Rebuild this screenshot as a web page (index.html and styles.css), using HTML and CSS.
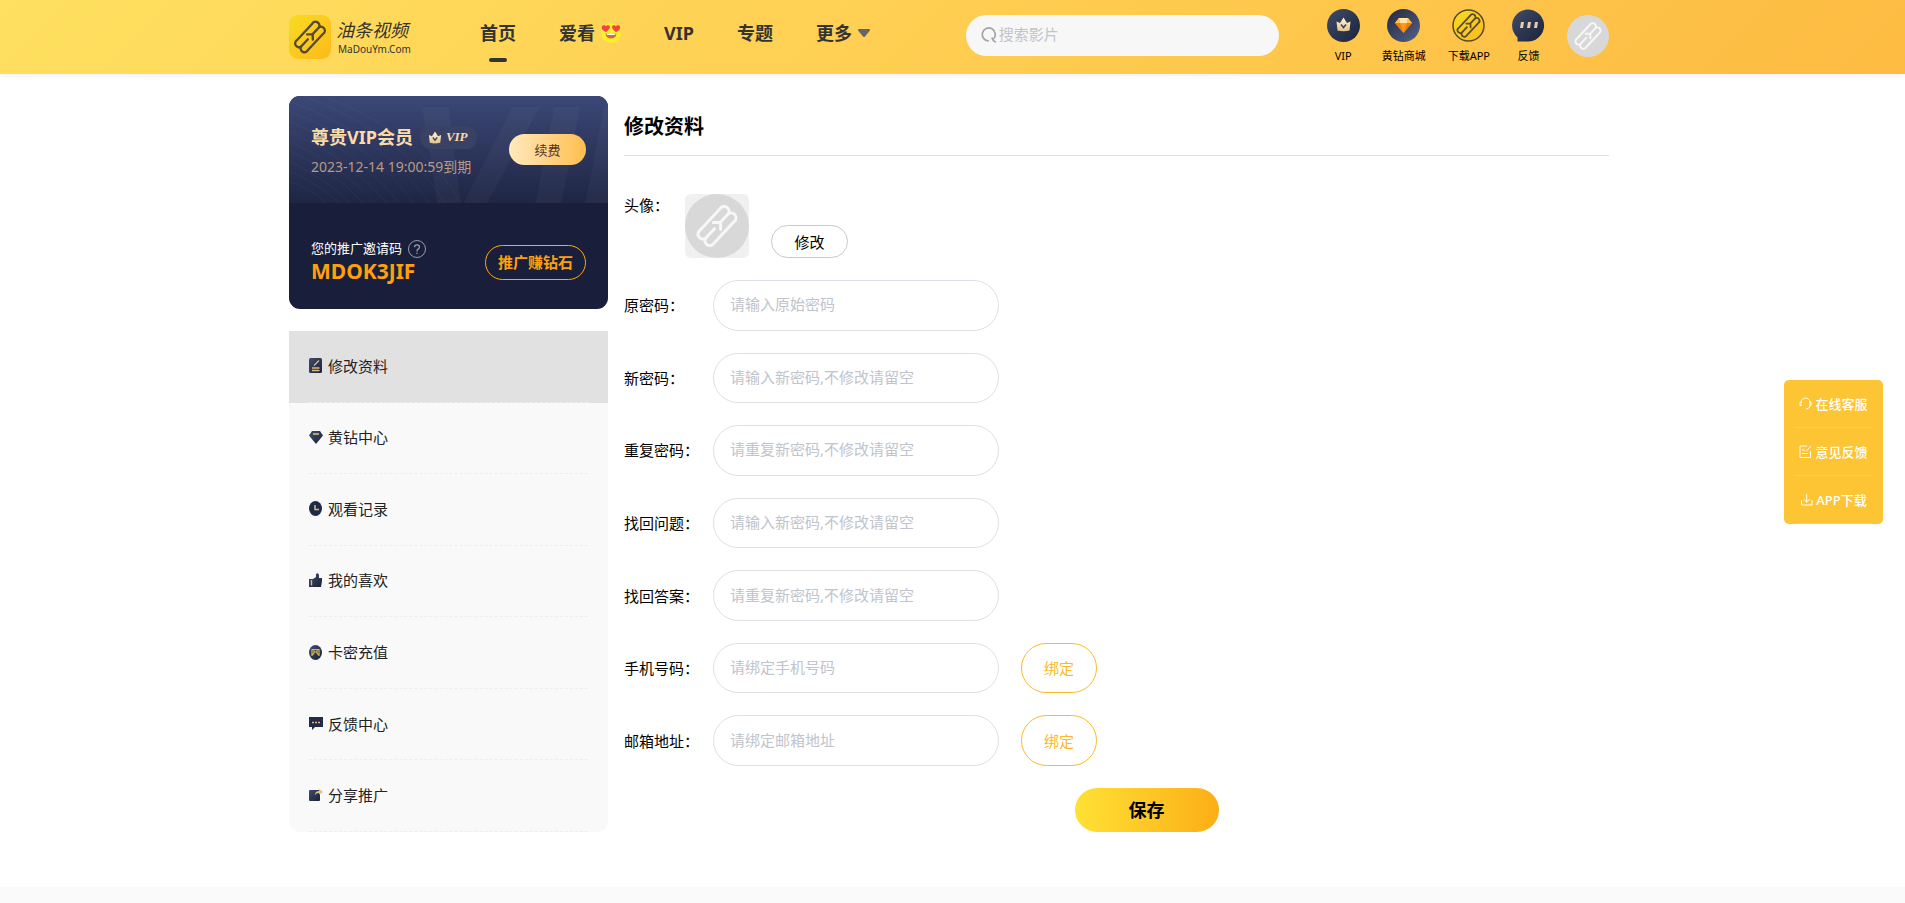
FILE: index.html
```
<!DOCTYPE html>
<html lang="zh-CN">
<head>
  <meta charset="UTF-8">
  <meta name="viewport" content="width=device-width, initial-scale=1.0">
  <title>修改资料 - 油条视频</title>
  <link rel="stylesheet" href="styles.css">
</head>
<body>
  <!-- shared icon shapes -->
  <svg class="defs" width="0" height="0" aria-hidden="true">
    <defs>
      <linearGradient id="dark" x1="0" y1="0" x2="1" y2="1">
        <stop offset="0" stop-color="#404d6c"/>
        <stop offset="1" stop-color="#1b2238"/>
      </linearGradient>
      <linearGradient id="darkUp" x1="0" y1="0" x2="1" y2="1">
        <stop offset="0" stop-color="#23283b"/>
        <stop offset="1" stop-color="#56618a"/>
      </linearGradient>
      <linearGradient id="yellow" x1="0" y1="0" x2="1" y2="1">
        <stop offset="0" stop-color="#f8dc22"/>
        <stop offset="1" stop-color="#fdb91b"/>
      </linearGradient>
      <linearGradient id="cream" x1="0" y1="0" x2="0" y2="1">
        <stop offset="0" stop-color="#fff3d8"/>
        <stop offset="1" stop-color="#e5c48c"/>
      </linearGradient>
    </defs>
    <symbol id="churro" viewBox="-32 -32 64 64">
      <g transform="rotate(-47)" fill="none" stroke="currentColor" stroke-width="3" stroke-linecap="round" stroke-linejoin="round">
        <path d="M-14-9.500H14A4.750 4.750 0 0 1 17 0A4.750 4.750 0 0 1 14 9.500H-14A4.750 4.750 0 0 1-17 0A4.750 4.750 0 0 1-14-9.500Z"/>
        <path d="M17 0H5L0-5M5 0L0 5M-17 0H-4"/>
      </g>
    </symbol>
    <symbol id="crown" viewBox="0 0 16 14">
      <path d="M1 4L4.500 5.500L8 0L11.500 5.500L15 4L14 13Q8 14.500 2 13Z" fill="url(#cream)"/>
      <path d="M5.500 7L8 10L10.500 7" fill="none" stroke="#38415c" stroke-width="1.500"/>
    </symbol>
  </svg>

  <header class="header">
    <div class="container header-inner">
      <a class="logo" href="#">
        <svg class="logo-mark" viewBox="0 0 42 44" aria-hidden="true">
          <rect width="42" height="44" rx="9" fill="url(#yellow)"/>
          <use href="#churro" x="-4" y="-3" width="50" height="50" color="#574a2c"/>
        </svg>
        <span class="logo-text">
          <span class="logo-name">油条视频</span>
          <span class="logo-site">MaDouYm.Com</span>
        </span>
      </a>

      <nav class="nav">
        <a class="active" href="#">首页</a>
        <a href="#">爱看
          <svg width="20" height="20" viewBox="0 0 20 20" aria-hidden="true">
            <circle cx="10" cy="10" r="10" fill="#fdee2c"/>
            <path d="M5 9C1.500 7.500 0 5 1.200 3C2.500 1.600 4.500 2.300 5 3.500C5.500 2 8 1.600 8.800 3C9.600 5 7 7.500 5 9Z" fill="#f5413c"/>
            <path d="M15 9C13 7.500 10.400 5 11.200 3C12 1.600 14.500 2 15 3.500C15.500 2.300 17.500 1.600 18.800 3C20 5 18.500 7.500 15 9Z" fill="#f5413c"/>
            <path d="M4.500 10.500H15.500Q15 15.500 10 15.500T4.500 10.500Z" fill="#d0703a"/>
            <path d="M5.500 10.500H14.500L14 12H6Z" fill="#fff"/>
          </svg>
        </a>
        <a href="#">VIP</a>
        <a href="#">专题</a>
        <a href="#">更多
          <svg width="12" height="8" viewBox="0 0 12 8" aria-hidden="true"><path d="M1 1H11L6 7Z" fill="#666" stroke="#666" stroke-width="2" stroke-linejoin="round"/></svg>
        </a>
      </nav>

      <form class="search">
        <svg width="16" height="16" viewBox="0 0 16 16" aria-hidden="true"><path d="M8 14A6.500 6.500 0 1 1 12.500 12M11 10.500Q12 14.500 15 15" fill="none" stroke="#a5a5a5" stroke-width="1.700"/></svg>
        <input type="text" placeholder="搜索影片" aria-label="搜索影片">
      </form>

      <div class="tools">
        <a href="#">
          <svg viewBox="0 0 33 33" aria-hidden="true">
            <circle cx="16.500" cy="16.500" r="16.500" fill="url(#dark)"/>
            <use href="#crown" x="8.500" y="8" width="16" height="15"/>
          </svg>
          <span>VIP</span>
        </a>
        <a href="#">
          <svg viewBox="0 0 33 33" aria-hidden="true">
            <circle cx="16.500" cy="16.500" r="16.500" fill="url(#darkUp)"/>
            <path d="M12 9H21L25 14L16.500 24L8 14Z" fill="#ff9a17"/>
            <path d="M12 9H21L20 14H13Z" fill="#ffe9a4"/>
            <path d="M8 14H13L16.500 24ZM20 14H25L16.500 24Z" fill="#ee7b09"/>
            <path d="M12 9L13 14H8ZM21 9L20 14H25Z" fill="#ffc244"/>
          </svg>
          <span>黄钻商城</span>
        </a>
        <a href="#">
          <svg viewBox="0 0 33 33" aria-hidden="true">
            <circle cx="16.500" cy="16.500" r="15.500" fill="url(#yellow)" stroke="#574a2c" stroke-width="1.500"/>
            <use href="#churro" x="-2" y="-2" width="37" height="37" color="#574a2c"/>
          </svg>
          <span>下载APP</span>
        </a>
        <a href="#">
          <svg viewBox="0 0 33 33" aria-hidden="true">
            <path d="M5.500 32.500V28.500A16 16 0 1 1 16.500 32.500Z" fill="url(#dark)"/>
            <path d="M9 13H12L11 19H8ZM16 13H19L18 19H15ZM23 13H26L25 19H22Z" fill="#e5cfa9"/>
          </svg>
          <span>反馈</span>
        </a>
        <a class="user" href="#" aria-label="个人中心">
          <svg viewBox="-32 -32 64 64" aria-hidden="true">
            <circle r="32" fill="#d8d8d8"/>
            <use href="#churro" x="-32" y="-32" width="64" height="64" color="#f7f7f7"/>
          </svg>
        </a>
      </div>
    </div>
  </header>

  <div class="page">
    <div class="container content">
      <aside class="side">
        <section class="vip-card">
          <div class="vip-top">
            <svg class="vip-bg" width="319" height="107" viewBox="0 0 319 107" aria-hidden="true">
              <g fill="none" stroke="#fff" stroke-opacity=".04">
                <path d="M0 25Q70 55 110 107M0 35Q60 62 98 107M0 45Q50 68 86 107M0 55Q45 74 74 107M0 65Q35 82 62 107M0 75Q30 88 50 107M0 85Q20 92 38 107"/>
                <path d="M0 15Q85 48 124 107M0 5Q95 40 140 107M15 0Q115 38 156 107M35 0Q135 40 172 107"/>
              </g>
              <text x="118" y="135" class="vip-mark">VIP</text>
            </svg>
            <div class="vip-info">
              <h2>尊贵VIP会员 <span class="badge"><svg width="14" height="13" aria-hidden="true"><use href="#crown" width="14" height="13"/></svg>VIP</span></h2>
              <p>2023-12-14 19:00:59到期</p>
            </div>
            <button type="button" class="btn-renew">续费</button>
          </div>
          <div class="vip-bottom">
            <div>
              <p class="invite">您的推广邀请码
                <svg width="18" height="18" viewBox="0 0 18 18" fill="none" stroke="#999ca8" aria-hidden="true"><circle cx="9" cy="9" r="8.500"/><path d="M6.500 7.200C6.500 4 11.500 4 11.500 7.200C11.500 8.800 9 9 9 11V11.500M9 12.800V14" stroke-width="1.300"/></svg>
              </p>
              <strong class="code">MDOK3JIF</strong>
            </div>
            <button type="button" class="btn-promo">推广赚钻石</button>
          </div>
        </section>

        <nav class="menu">
          <a class="active" href="#">
            <svg viewBox="0 0 14 15" aria-hidden="true"><rect width="13" height="15" rx="1.500" fill="url(#dark)"/><path d="M3 10H10.500M3 12.500H10.500M5 7.500L10 2.500" stroke="#dcb980" stroke-width="1.300"/></svg>
            <span>修改资料</span>
          </a>
          <a href="#">
            <svg viewBox="0 0 14 15" aria-hidden="true"><path d="M3 1H11L14 5.500L7 14L0 5.500Z" fill="url(#dark)"/><path d="M4 4H10" stroke="#dcb980" stroke-width="1.600"/></svg>
            <span>黄钻中心</span>
          </a>
          <a href="#">
            <svg viewBox="0 0 14 15" aria-hidden="true"><ellipse cx="6.500" cy="7.500" rx="6.500" ry="7.500" fill="#1f2a47"/><path d="M6 4V8.500H10" fill="none" stroke="#dcb980" stroke-width="1.500"/></svg>
            <span>观看记录</span>
          </a>
          <a href="#">
            <svg viewBox="0 0 14 15" aria-hidden="true"><path d="M0 6H4L7 4V1Q9-1 10 2V5H13V8L12 14H0Z" fill="url(#dark)"/><path d="M2.500 7V12.500" stroke="#dcb980" stroke-width="1.400"/></svg>
            <span>我的喜欢</span>
          </a>
          <a href="#">
            <svg viewBox="0 0 14 15" aria-hidden="true"><ellipse cx="6.500" cy="7.500" rx="6.500" ry="7.500" fill="url(#dark)"/><path d="M3 11V4.500H10V11M5 5V8L3.500 10M8 5V8L9.500 10M5 7H8" fill="none" stroke="#dcb454" stroke-width="1.200"/></svg>
            <span>卡密充值</span>
          </a>
          <a href="#">
            <svg viewBox="0 0 14 15" aria-hidden="true"><path d="M0 1H14V11H6L3 14V11H0Z" fill="#222c49"/><path d="M3 6.500H5M6 6.500H8M9 6.500H11" stroke="#dcb980" stroke-width="1.500"/></svg>
            <span>反馈中心</span>
          </a>
          <a href="#">
            <svg viewBox="0 0 14 15" aria-hidden="true"><rect y="2" width="11" height="11" rx="1" fill="url(#dark)"/><path d="M6 7Q6 3 10 3V1L14 4L10 6.500V5Q7 5 6 7Z" fill="#e2bf72"/></svg>
            <span>分享推广</span>
          </a>
        </nav>
      </aside>

      <main class="main">
        <h1>修改资料</h1>
        <form class="profile">
          <div class="avatar-row">
            <span class="avatar-label">头像：</span>
            <svg class="avatar" viewBox="-32 -32 64 64" role="img" aria-label="头像">
              <circle r="32" fill="#d8d8d8"/>
              <use href="#churro" x="-32" y="-32" width="64" height="64" color="#f7f7f7"/>
            </svg>
            <button type="button" class="btn-edit">修改</button>
          </div>
          <div class="fields">
            <div class="field">
              <label for="oldPwd">原密码：</label>
              <input type="password" id="oldPwd" placeholder="请输入原始密码">
            </div>
            <div class="field">
              <label for="newPwd">新密码：</label>
              <input type="password" id="newPwd" placeholder="请输入新密码,不修改请留空">
            </div>
            <div class="field">
              <label for="rePwd">重复密码：</label>
              <input type="password" id="rePwd" placeholder="请重复新密码,不修改请留空">
            </div>
            <div class="field">
              <label for="question">找回问题：</label>
              <input type="text" id="question" placeholder="请输入新密码,不修改请留空">
            </div>
            <div class="field">
              <label for="answer">找回答案：</label>
              <input type="text" id="answer" placeholder="请重复新密码,不修改请留空">
            </div>
            <div class="field">
              <label for="phone">手机号码：</label>
              <input type="text" id="phone" placeholder="请绑定手机号码">
              <button type="button" class="btn-bind">绑定</button>
            </div>
            <div class="field">
              <label for="email">邮箱地址：</label>
              <input type="text" id="email" placeholder="请绑定邮箱地址">
              <button type="button" class="btn-bind">绑定</button>
            </div>
          </div>
          <div class="submit">
            <button type="submit" class="btn-save">保存</button>
          </div>
        </form>
      </main>
    </div>
  </div>

  <footer class="footer"></footer>

  <div class="float-bar">
    <a href="#">
      <svg width="13" height="13" viewBox="0 0 13 13" aria-hidden="true"><path d="M2 8V5.500A4.500 4.500 0 0 1 11 5.500V9Q10 12 7 12M3 5H1V8.500H3M10 5H12V8.500H11"/></svg>
      <span>在线客服</span>
    </a>
    <a href="#">
      <svg width="13" height="13" viewBox="0 0 13 13" aria-hidden="true"><path d="M8 1H1V12.500H11.500V6M3 5H6M3 8.500H9M7 6.500L12 1"/></svg>
      <span>意见反馈</span>
    </a>
    <a href="#">
      <svg width="13" height="13" viewBox="0 0 13 13" aria-hidden="true"><path d="M1.500 7V12H12V7M6.700 1V9M4 6.500L6.700 9L9.500 6.500"/></svg>
      <span>APP下载</span>
    </a>
  </div>
</body>
</html>
```
FILE: styles.css
```
* {
  box-sizing: border-box;
}
body {
  display: flex;
  flex-direction: column;
  min-height: 100vh;
  margin: 0;
  font-family: "Noto Sans", "Noto Sans CJK SC", sans-serif;
  font-size: 15px;
  line-height: 22px;
  color: #000;
  background-color: #fff;
}
h1, h2, p {
  margin: 0;
}
a {
  color: inherit;
  text-decoration: none;
}
svg {
  display: block;
  flex: none;
}
button, input {
  font: inherit;
}
button {
  padding: 0;
  cursor: pointer;
}
.defs {
  position: absolute;
}
.container {
  width: 100%;
  max-width: 1320px;
  margin: 0 auto;
}

/* header */
.header {
  padding-right: 7px;
  background: linear-gradient(135deg, #ffe060, #fdbb42);
  box-shadow: 0 2px 6px rgba(0, 0, 0, 0.06);
}
.header-inner {
  display: flex;
  align-items: center;
  height: 74px;
}
.logo {
  display: flex;
  align-items: center;
  gap: 5px;
  width: 191px;
}
.logo-mark {
  width: 42px;
  height: 44px;
}
.logo-text {
  display: flex;
  flex-direction: column;
  color: #33332f;
}
.logo-name {
  font-size: 18px;
  font-style: italic;
  line-height: 24px;
}
.logo-site {
  padding-left: 2px;
  font-size: 10px;
  line-height: 14px;
}
.nav {
  display: flex;
  gap: 43px;
  font-size: 18px;
  font-weight: bold;
  color: #333;
}
.nav a {
  position: relative;
  display: flex;
  align-items: center;
  gap: 6px;
  height: 24px;
  margin-bottom: 8px;
}
.nav .active::after {
  content: "";
  position: absolute;
  left: 50%;
  bottom: -17px;
  width: 18px;
  height: 4px;
  margin-left: -9px;
  border-radius: 2px;
  background-color: #333;
}
.search {
  display: flex;
  align-items: center;
  gap: 2px;
  width: 313px;
  height: 41px;
  margin-left: auto;
  margin-bottom: 4px;
  padding: 0 15px;
  border-radius: 21px;
  background-color: #f7f7f7;
}
.search input {
  flex: 1;
  min-width: 0;
  padding: 0 0 2px;
  border: none;
  outline: none;
  background: none;
}
input::placeholder {
  color: #c0c4cc;
  opacity: 1;
}
.tools {
  display: flex;
  align-items: center;
  gap: 22px;
  margin-left: 48px;
  margin-bottom: 2px;
  font-size: 11px;
  line-height: 16px;
}
.tools a {
  display: flex;
  flex-direction: column;
  align-items: center;
  gap: 6px;
}
.tools svg {
  width: 33px;
  height: 33px;
}
.tools .user svg {
  width: 42px;
  height: 42px;
}

/* layout */
.page {
  padding: 22px 7px 55px 0;
}
.content {
  display: flex;
  gap: 16px;
}
.side {
  flex: none;
  width: 319px;
}

/* vip card */
.vip-card {
  overflow: hidden;
  margin-bottom: 22px;
  border-radius: 11px;
  color: #fff;
  background-color: #191f3a;
}
.vip-top, .vip-bottom {
  display: flex;
  justify-content: space-between;
  padding: 0 22px;
}
.vip-top {
  position: relative;
  height: 107px;
  padding-top: 28px;
  background: linear-gradient(#3b4776, #1f2644);
}
.vip-bg {
  position: absolute;
  top: 0;
  left: 0;
}
.vip-mark {
  font-family: "Liberation Sans", sans-serif;
  font-size: 180px;
  font-weight: bold;
  font-style: italic;
  fill: #fff;
  fill-opacity: 0.03;
}
.vip-info {
  position: relative;
}
.vip-info h2 {
  display: flex;
  align-items: center;
  gap: 7px;
  margin-bottom: 7px;
  font-size: 18px;
  line-height: 26px;
  color: #fcdca6;
}
.badge {
  display: flex;
  align-items: center;
  gap: 4px;
  height: 23px;
  padding: 0 9px 0 8px;
  border-radius: 12px;
  font-family: "Liberation Serif", serif;
  font-size: 13px;
  font-style: italic;
  background-color: #3a4264;
}
.vip-info p {
  font-size: 14px;
  line-height: 20px;
  color: #b89b86;
}
.btn-renew {
  position: relative;
  width: 77px;
  height: 31px;
  margin-top: 10px;
  border: none;
  border-radius: 16px;
  font-size: 13px;
  color: #5b3424;
  background: linear-gradient(90deg, #ffe9bd, #ffbe4f);
}
.vip-bottom {
  align-items: center;
  height: 106px;
  padding-top: 12px;
}
.invite {
  display: flex;
  align-items: flex-start;
  gap: 6px;
  font-size: 13px;
  line-height: 16px;
}
.code {
  display: block;
  font-size: 21px;
  line-height: 26px;
  color: #ff9f0d;
}
.btn-promo {
  width: 101px;
  height: 35px;
  border: 1px solid #ffa80f;
  border-radius: 18px;
  font-weight: bold;
  color: #ff9f0d;
  background: none;
}

/* side menu */
.menu {
  display: grid;
  grid-auto-rows: 1fr;
  min-height: 501px;
  border-radius: 11px;
  color: #222;
  background-color: #f9f9f9;
}
.menu a {
  position: relative;
  display: flex;
  align-items: center;
  gap: 5px;
  padding: 0 20px 2px;
}
.menu a::after {
  content: "";
  position: absolute;
  right: 20px;
  bottom: 0;
  left: 20px;
  border-bottom: 1px dashed #eee;
}
.menu .active {
  background-color: #e1e1e1;
}
.menu svg {
  width: 14px;
  height: 15px;
}

/* profile form */
.main {
  flex: 1;
  min-width: 0;
}
.main h1 {
  padding: 16px 0 13px;
  border-bottom: 1px solid #dcdfe6;
  font-size: 20px;
  line-height: 30px;
}
.avatar-row {
  display: flex;
  align-items: flex-end;
  margin: 38px 0 22px;
}
.avatar-label {
  align-self: flex-start;
  width: 61px;
}
.avatar {
  width: 64px;
  height: 64px;
  margin-right: 22px;
  border-radius: 6px;
  background-color: #f0f0f0;
}
.btn-edit {
  width: 77px;
  height: 33px;
  border: 1px solid #c9c9c9;
  border-radius: 17px;
  background-color: #fff;
}
.fields {
  display: grid;
  grid-auto-rows: 1fr;
  gap: 22px;
  min-height: 486px;
}
.field {
  display: flex;
}
.field label {
  align-self: center;
  width: 89px;
}
.field input {
  width: 286px;
  padding: 0 16px 2px;
  border: 1px solid #dcdfe6;
  border-radius: 26px;
  outline: none;
}
.btn-bind {
  width: 76px;
  margin-left: 22px;
  border: 1px solid #fdb827;
  border-radius: 26px;
  color: #fdb827;
  background-color: #fff;
}
.submit {
  display: flex;
  justify-content: center;
  margin-top: 22px;
  padding-left: 60px;
}
.btn-save {
  width: 144px;
  height: 44px;
  border: none;
  border-radius: 22px;
  font-size: 18px;
  font-weight: bold;
  background: linear-gradient(90deg, #ffe135, #fcae16);
}

.footer {
  flex: 1;
  background-color: #fafafa;
}

/* floating shortcuts */
.float-bar {
  position: fixed;
  top: 380px;
  right: 22px;
  width: 99px;
  padding: 0 11px;
  border-radius: 5px;
  font-size: 13px;
  font-weight: 500;
  color: #fff;
  background-color: #fdc434;
}
.float-bar a {
  display: flex;
  align-items: center;
  justify-content: center;
  gap: 3px;
  height: 48px;
  border-bottom: 1px solid #fdcd57;
  white-space: nowrap;
}
.float-bar svg {
  fill: none;
  stroke: #fff;
}
```
